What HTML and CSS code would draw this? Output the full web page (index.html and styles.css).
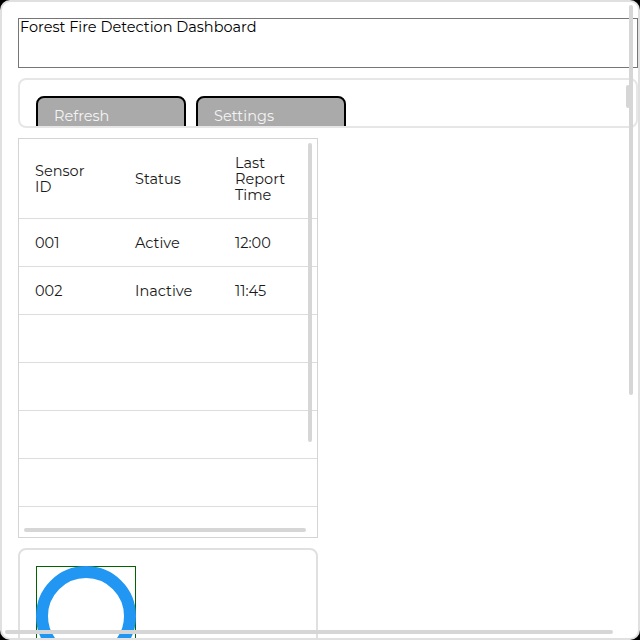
FILE: index.html
```html
<!DOCTYPE html>
<html lang="en">
<head>
<meta charset="utf-8">
<title>Forest Fire Detection Dashboard</title>
<link rel="stylesheet" href="styles.css">
</head>
<body>
<div class="app">
  <div class="title">Forest Fire Detection Dashboard</div>
  <div class="toolbar">
    <button class="btn">Refresh</button>
    <button class="btn">Settings</button>
    <span class="thumb toolbar-v"></span>
  </div>
  <div class="table-wrap">
    <table class="sensors">
      <thead>
        <tr><th>Sensor ID</th><th>Status</th><th>Last Report Time</th></tr>
      </thead>
      <tbody>
        <tr><td>001</td><td>Active</td><td>12:00</td></tr>
        <tr><td>002</td><td>Inactive</td><td>11:45</td></tr>
        <tr><td>&nbsp;</td><td>&nbsp;</td><td>&nbsp;</td></tr>
        <tr><td>&nbsp;</td><td>&nbsp;</td><td>&nbsp;</td></tr>
        <tr><td>&nbsp;</td><td>&nbsp;</td><td>&nbsp;</td></tr>
        <tr><td>&nbsp;</td><td>&nbsp;</td><td>&nbsp;</td></tr>
        <tr><td>&nbsp;</td><td>&nbsp;</td><td>&nbsp;</td></tr>
        <tr><td>&nbsp;</td><td>&nbsp;</td><td>&nbsp;</td></tr>
        <tr><td>&nbsp;</td><td>&nbsp;</td><td>&nbsp;</td></tr>
      </tbody>
    </table>
    <span class="thumb table-v"></span>
    <span class="thumb table-h"></span>
  </div>
  <div class="chart-panel">
    <div class="chart">
      <svg class="ring" viewBox="0 0 100 100" width="100" height="100">
        <circle cx="50" cy="50" r="44" fill="none" stroke="#2196f3" stroke-width="12"/>
      </svg>
    </div>
  </div>
  <span class="thumb app-v"></span>
  <span class="thumb app-h"></span>
</div>
</body>
</html>
```
FILE: styles.css
```css
html, body {
  margin: 0;
  padding: 0;
  background: #000;
}
.app {
  position: relative;
  box-sizing: border-box;
  width: 640px;
  height: 640px;
  background: #fff;
  border: 2px solid #e0e0e0;
  border-radius: 10px;
  padding: 16px;
  overflow: hidden;
  font-family: Montserrat, "DejaVu Sans", sans-serif;
  color: #1a1a1a;
}
.thumb {
  position: absolute;
  background: #d6d6d6;
  border-radius: 3px;
}
.app-v {
  left: 627px;
  top: 3px;
  width: 4px;
  height: 390px;
}
.app-h {
  left: 3px;
  top: 628px;
  width: 608px;
  height: 4px;
}
.title {
  box-sizing: border-box;
  width: 620px;
  height: 50px;
  border: 1px solid #767676;
  padding: 0 1px;
  font-size: 14.5px;
  line-height: 17px;
  color: #000;
}
.toolbar {
  position: relative;
  box-sizing: border-box;
  width: 620px;
  height: 50px;
  margin-top: 10px;
  border: 2px solid #e6e6e6;
  border-radius: 8px;
  padding: 16px;
  overflow: hidden;
  display: flex;
  gap: 10px;
  align-items: flex-start;
}
.toolbar-v {
  left: 606px;
  top: 5px;
  width: 4px;
  height: 23px;
}
.btn {
  box-sizing: border-box;
  flex: 0 0 150px;
  width: 150px;
  height: 40px;
  background: #aaa;
  border: 2px solid #000;
  border-radius: 8px;
  color: #f4f4f4;
  font-family: Montserrat, "DejaVu Sans", sans-serif;
  font-size: 14.5px;
  text-align: left;
  padding: 0 16px;
}
.table-wrap {
  position: relative;
  box-sizing: border-box;
  width: 300px;
  height: 400px;
  margin-top: 10px;
  border: 1px solid #d4d4d4;
  overflow: hidden;
}
.table-v {
  left: 289px;
  top: 4px;
  width: 4px;
  height: 299px;
}
.table-h {
  left: 5px;
  top: 389px;
  width: 282px;
  height: 4px;
}
.sensors {
  border-collapse: collapse;
  width: 300px;
  table-layout: fixed;
  font-size: 14.5px;
  line-height: 16px;
}
.sensors th,
.sensors td {
  width: 68px;
  padding: 16px 16px 15px;
  text-align: left;
  font-weight: normal;
  border-bottom: 1px solid #ddd;
  vertical-align: middle;
}
.sensors th {
  width: 62px;
  padding-right: 22px;
}
.chart-panel {
  box-sizing: border-box;
  width: 300px;
  height: 470px;
  margin-top: 10px;
  border: 2px solid #e0e0e0;
  border-radius: 8px;
  padding: 16px;
}
.chart {
  box-sizing: border-box;
  width: 100px;
  height: 300px;
  border: 1px solid #006400;
}
.ring {
  display: block;
  margin: -1px;
}
```
